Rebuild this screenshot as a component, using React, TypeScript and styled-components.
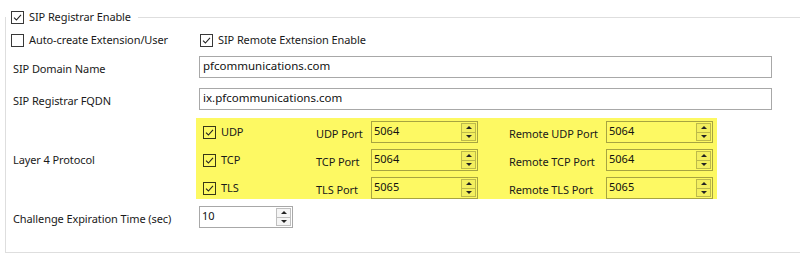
import React from 'react'
import styled, { createGlobalStyle } from 'styled-components'

const GlobalStyle = createGlobalStyle`
  html, body {
    margin: 0;
    background: #ffffff;
    overflow: hidden;
  }
  body {
    font-family: 'Noto Sans', 'Open Sans', sans-serif;
    font-size: 11px;
    letter-spacing: -0.1px;
    color: #1a1a1a;
  }
`

const Page = styled.div`
  width: 800px;
  height: 260px;
  padding-top: 7px;
  box-sizing: border-box;
`

const Group = styled.fieldset`
  margin: 0 0 0 5px;
  padding: 0 0 24px 0;
  width: 820px;
  border: 1px solid #dedede;
  min-inline-size: 0;
`

const Legend = styled.legend`
  padding: 0 7px 0 5px;
  height: 20px;
  display: flex;
  align-items: center;
`

const Body = styled.div`
  padding-left: 7px;
  display: flex;
  flex-direction: column;
`

const CheckRow = styled.div`
  margin-left: -2px;
  height: 22px;
  margin-top: 2px;
  display: grid;
  grid-template-columns: 189px auto;
  align-items: center;
`

const FieldRow = styled.div<{ $gap?: number; $height?: number }>`
  display: grid;
  grid-template-columns: 186px 573px;
  align-items: center;
  height: ${(p) => p.$height ?? 32}px;
  margin-top: ${(p) => p.$gap ?? 0}px;
`

const Label = styled.span`
  white-space: nowrap;
  line-height: 16px;
  padding-top: 3px;
`

const CheckLabel = styled.label`
  display: inline-flex;
  align-items: center;
  gap: 5px;
  white-space: nowrap;
  line-height: 16px;
`

const Box = styled.span`
  width: 13px;
  height: 13px;
  box-sizing: border-box;
  border: 1px solid rgba(0, 0, 0, 0.78);
  display: inline-flex;
  align-items: center;
  justify-content: center;
  flex: none;
`

const TextBox = styled.input`
  box-sizing: border-box;
  height: 22px;
  width: 100%;
  border: 1px solid rgba(0, 0, 0, 0.34);
  background: transparent;
  font: inherit;
  font-size: 11.5px;
  color: #111;
  padding: 0 3px 3px 3px;
  outline: none;
`

const SpinWrap = styled.div<{ $width: number }>`
  width: ${(p) => p.$width}px;
  height: 22px;
  box-sizing: border-box;
  border: 1px solid rgba(0, 0, 0, 0.34);
  display: flex;
`

const SpinText = styled.input`
  flex: 1;
  min-width: 0;
  border: none;
  background: transparent;
  font: inherit;
  color: #111;
  padding: 0 2px 4px 2px;
  outline: none;
`

const Spinner = styled.div`
  width: 15px;
  margin: 1px 1px 1px 0;
  display: flex;
  flex-direction: column;
`

const SpinButton = styled.span<{ $down?: boolean }>`
  flex: 1;
  box-sizing: border-box;
  border: 1px solid rgba(0, 0, 0, 0.22);
  ${(p) => (p.$down ? 'border-top: none;' : '')}
  background: rgba(0, 0, 0, 0.04);
  display: flex;
  align-items: center;
  justify-content: center;

  &::after {
    content: '';
    width: 0;
    height: 0;
    border-left: 3px solid transparent;
    border-right: 3px solid transparent;
    ${(p) =>
      p.$down
        ? 'border-top: 3px solid #222;'
        : 'border-bottom: 3px solid #222;'}
  }
`

const ProtoRow = styled.div`
  display: flex;
  align-items: center;
  height: 81px;
  margin-top: 3px;
`

const ProtoLabel = styled(Label)`
  width: 183px;
`

const Highlight = styled.div`
  width: 521px;
  box-sizing: border-box;
  background: #fdf963;
  padding: 3px 4px 0 7px;
  display: grid;
  grid-template-columns: 113px 55px 107px 31px 97px 107px;
  grid-auto-rows: 22px;
  row-gap: 6px;
  align-items: center;
`

const Spacer = styled.span``

const Check = ({ checked }: { checked?: boolean }) => (
  <Box>
    {checked && (
      <svg width="11" height="11" viewBox="0 0 11 11">
        <path
          d="M2 5.6 L4.4 8 L9 2.8"
          fill="none"
          stroke="#222"
          strokeWidth="1.1"
        />
      </svg>
    )}
  </Box>
)

const SpinInput = ({ value, width }: { value: string; width: number }) => (
  <SpinWrap $width={width}>
    <SpinText readOnly value={value} />
    <Spinner>
      <SpinButton />
      <SpinButton $down />
    </Spinner>
  </SpinWrap>
)

const protocols = [
  { name: 'UDP', port: '5064', remote: '5064' },
  { name: 'TCP', port: '5064', remote: '5064' },
  { name: 'TLS', port: '5065', remote: '5065' },
]

export default function App() {
  return (
    <Page>
      <GlobalStyle />
      <Group>
        <Legend>
          <CheckLabel>
            <Check checked />
            SIP Registrar Enable
          </CheckLabel>
        </Legend>
        <Body>
          <CheckRow>
            <CheckLabel>
              <Check />
              Auto-create Extension/User
            </CheckLabel>
            <CheckLabel>
              <Check checked />
              SIP Remote Extension Enable
            </CheckLabel>
          </CheckRow>
          <FieldRow>
            <Label>SIP Domain Name</Label>
            <TextBox readOnly value="pfcommunications.com" />
          </FieldRow>
          <FieldRow>
            <Label>SIP Registrar FQDN</Label>
            <TextBox readOnly value="ix.pfcommunications.com" />
          </FieldRow>
          <ProtoRow>
            <ProtoLabel>Layer 4 Protocol</ProtoLabel>
            <Highlight>
              {protocols.map((p) => (
                <React.Fragment key={p.name}>
                  <CheckLabel>
                    <Check checked />
                    {p.name}
                  </CheckLabel>
                  <Label>{p.name} Port</Label>
                  <SpinInput value={p.port} width={107} />
                  <Spacer />
                  <Label>Remote {p.name} Port</Label>
                  <SpinInput value={p.remote} width={107} />
                </React.Fragment>
              ))}
            </Highlight>
          </ProtoRow>
          <FieldRow $gap={7} $height={22}>
            <Label>Challenge Expiration Time (sec)</Label>
            <SpinInput value="10" width={94} />
          </FieldRow>
        </Body>
      </Group>
    </Page>
  )
}
